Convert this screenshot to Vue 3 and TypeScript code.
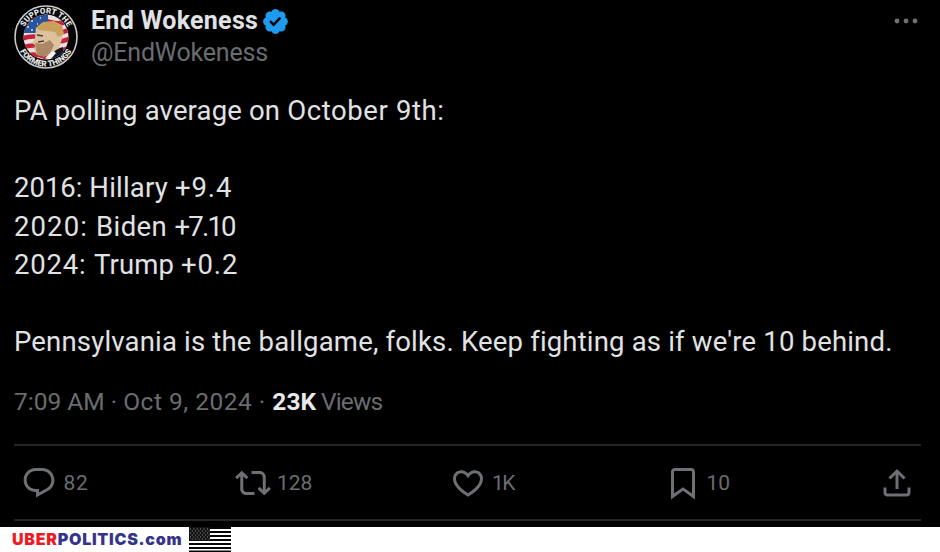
<script setup lang="ts">
interface Action {
  name: string
  label: string
  path: string
}

const actions: Action[] = [
  {
    name: 'reply',
    label: '82',
    path: 'M1.751 10c0-4.42 3.584-8 8.005-8h4.366c4.49 0 8.129 3.64 8.129 8.13 0 2.96-1.607 5.68-4.196 7.11l-8.054 4.46v-3.69h-.067c-4.49.1-8.183-3.51-8.183-8.01zm8.005-6c-3.317 0-6.005 2.69-6.005 6 0 3.37 2.77 6.08 6.138 6.01l.351-.01h1.761v2.3l5.087-2.81c1.951-1.08 3.163-3.13 3.163-5.36 0-3.39-2.744-6.13-6.129-6.13H9.756z',
  },
  {
    name: 'repost',
    label: '128',
    path: 'M4.5 3.88l4.432 4.14-1.364 1.46L5.5 7.55V16c0 1.1.896 2 2 2H13v2H7.5c-2.209 0-4-1.79-4-4V7.55L1.432 9.48.068 8.02 4.5 3.88zM16.5 6H11V4h5.5c2.209 0 4 1.79 4 4v8.45l2.068-1.93 1.364 1.46-4.432 4.14-4.432-4.14 1.364-1.46 2.068 1.93V8c0-1.1-.896-2-2-2z',
  },
  {
    name: 'like',
    label: '1K',
    path: 'M16.697 5.5c-1.222-.06-2.679.51-3.89 2.16l-.805 1.09-.806-1.09C9.984 6.01 8.526 5.44 7.304 5.5c-1.243.07-2.349.78-2.91 1.91-.552 1.12-.633 2.78.479 4.82 1.074 1.97 3.257 4.27 7.129 6.61 3.87-2.34 6.052-4.64 7.126-6.61 1.111-2.04 1.03-3.7.477-4.82-.561-1.13-1.666-1.84-2.908-1.91zm4.187 7.69c-1.351 2.48-4.001 5.12-8.379 7.67l-.503.3-.504-.3c-4.379-2.55-7.029-5.19-8.382-7.67-1.36-2.5-1.41-4.86-.514-6.67.887-1.79 2.647-2.91 4.601-3.01 1.651-.09 3.368.56 4.798 2.01 1.429-1.45 3.146-2.1 4.796-2.01 1.954.1 3.714 1.22 4.601 3.01.896 1.81.846 4.17-.514 6.67z',
  },
  {
    name: 'bookmark',
    label: '10',
    path: 'M4 4.5C4 3.12 5.119 2 6.5 2h11C18.881 2 20 3.12 20 4.5v18.44l-8-5.71-8 5.71V4.5zM6.5 4c-.276 0-.5.22-.5.5v14.56l6-4.29 6 4.29V4.5c0-.28-.224-.5-.5-.5h-11z',
  },
  {
    name: 'share',
    label: '',
    path: 'M12 2.59l5.7 5.7-1.41 1.42L13 6.41V16h-2V6.41l-3.3 3.3-1.41-1.42L12 2.59zM21 15l-.02 3.51c0 1.38-1.12 2.49-2.5 2.49H5.5C4.11 21 3 19.88 3 18.5V15h2v3.5c0 .28.22.5.5.5h12.98c.28 0 .5-.22.5-.5L19 15h2z',
  },
]

const results = [
  { cls: 'hillary', year: '2016: ', who: 'Hillary ', lead: '+9.4' },
  { cls: 'biden', year: '2020: ', who: 'Biden ', lead: '+7.10' },
  { cls: 'trump', year: '2024: ', who: 'Trump ', lead: '+0.2' },
]
</script>

<template>
  <main class="page">
    <article class="post">
      <header class="head">
        <svg class="avatar" viewBox="0 0 66 66">
          <defs>
            <clipPath id="disc"><circle cx="33" cy="33" r="22.5" /></clipPath>
            <path id="arc-top" d="M9.5 33a23.5 23.5 0 0 1 47 0" />
            <path id="arc-bottom" d="M3.5 33a29.5 29.5 0 0 0 59 0" />
          </defs>
          <circle cx="33" cy="33" r="31" fill="#050505" stroke="#c9c9c9" stroke-width="1.6" />
          <g clip-path="url(#disc)">
            <rect x="8" y="8" width="50" height="50" fill="#e9dfe0" />
            <path d="M8 17q12-5 25 0t25-1M8 26q12-5 25 0t25-1M8 35q12-5 25 0t25-1M8 44q12-5 25 0t25-1M8 53q12-5 25 0t25-1" fill="none" stroke="#c5213b" stroke-width="4.6" />
            <path d="M8 8h27v9L24 29H8z" fill="#29549c" />
            <path d="M14 23h2m2-6h2m4 3h1m-7 6h2m7-12h1" stroke="#dbe5f4" stroke-width="1.5" />
            <path d="M23 24l6-5 12-1 8 4 1 10-3 9-2 6-7 3-5 2-9-1-3-5 1-5-3-2 3-5z" fill="#dcc29c" />
            <path d="M24 23l6-5 11-1 8 4 2 9-6 3-3-5-17-2z" fill="#c9a05c" />
            <path d="M22 39l7 1 8-4 4 5-4 8-6 4-7-2z" fill="#ab8766" />
            <path d="M24 31l6 1M25 38l6-1" stroke="#523c34" stroke-width="1.4" />
            <path d="M35 54l8-8 7-3v13L39 59z" fill="#111820" />
            <path d="M32 54l8-7 3 2-6 7z" fill="#f2f2ee" />
          </g>
          <text class="ring"><textPath href="#arc-top" startOffset="50%">SUPPORT THE</textPath></text>
          <text class="ring"><textPath href="#arc-bottom" startOffset="50%">FORMER THINGS</textPath></text>
        </svg>
        <div class="who">
          <div class="name-row">
            <span class="name">End Wokeness</span>
            <svg class="badge" viewBox="0 0 22 22">
              <path fill="#1d9bf0" d="M20.396 11c-.018-.646-.215-1.275-.57-1.816-.354-.54-.852-.972-1.438-1.246.223-.607.27-1.264.14-1.897-.131-.634-.437-1.218-.882-1.687-.47-.445-1.053-.75-1.687-.882-.633-.13-1.29-.083-1.897.14-.273-.587-.704-1.086-1.245-1.44S11.647 1.62 11 1.604c-.646.017-1.273.213-1.813.568s-.969.854-1.24 1.44c-.608-.223-1.267-.272-1.902-.14-.635.13-1.22.436-1.69.882-.445.47-.749 1.055-.878 1.688-.13.633-.08 1.29.144 1.896-.587.274-1.087.705-1.443 1.245-.356.54-.555 1.17-.574 1.817.02.647.218 1.276.574 1.817.356.54.856.972 1.443 1.245-.224.606-.274 1.263-.144 1.896.13.634.433 1.218.877 1.688.47.443 1.054.747 1.687.878.633.132 1.29.084 1.897-.136.274.586.705 1.084 1.246 1.439.54.354 1.17.551 1.816.569.647-.016 1.276-.213 1.817-.567s.972-.854 1.245-1.44c.604.239 1.266.296 1.903.164.636-.132 1.22-.447 1.68-.907.46-.46.776-1.044.908-1.681s.075-1.299-.165-1.903c.586-.274 1.084-.705 1.439-1.246.354-.54.551-1.17.569-1.816zM9.662 14.85l-3.429-3.428 1.293-1.302 2.072 2.072 4.4-4.794 1.347 1.246z" />
            </svg>
          </div>
          <div class="handle">@EndWokeness</div>
        </div>
        <svg class="more" viewBox="0 0 24 6"><circle cx="3" cy="3" r="2.4" /><circle cx="12" cy="3" r="2.4" /><circle cx="21" cy="3" r="2.4" /></svg>
      </header>

      <div class="body">
        <p class="lead"><span class="intro">PA polling average on </span>October 9th:</p>
        <p></p>
        <p v-for="r in results" :key="r.cls" :class="r.cls"><span class="year">{{ r.year }}</span><span class="cand">{{ r.who }}</span><span class="margin">{{ r.lead }}</span></p>
        <p></p>
        <p class="closing">Pennsylvania is the ballgame, folks. Keep fighting as if we're 10 behind.</p>
      </div>

      <div class="meta"><span>7:09 AM · </span><span class="date">Oct 9, 2024 · </span><b>23K</b><span class="views">Views</span></div>

      <div class="actions">
        <div v-for="a in actions" :key="a.name" class="action" :class="a.name">
          <svg viewBox="0 0 24 24"><path :d="a.path" /></svg>
          <span v-if="a.label">{{ a.label }}</span>
        </div>
      </div>
    </article>

    <footer class="brand">
      <span class="site"><span class="red">UBER</span>POLITICS.com</span>
      <svg class="flag" viewBox="0 0 42 25">
        <rect width="42" height="25" fill="#fff" />
        <path d="M0 1h42M0 5h42M0 9h42M0 13h42M0 17h42M0 21h42M0 24.6h42" stroke="#050505" stroke-width="2.2" />
        <rect width="21" height="14" fill="#111" />
        <path d="M1 2h20M1 6h20M1 10h20" stroke="#999" stroke-width="1" stroke-dasharray="1 2.4" />
        <path d="M2.7 4h18M2.7 8h18M2.7 12h18" stroke="#999" stroke-width="1" stroke-dasharray="1 2.4" />
      </svg>
    </footer>
  </main>
</template>

<style>
body {
  margin: 0;
  background: #fff;
}
</style>

<style scoped>
.page {
  width: 940px;
  height: 552px;
  overflow: hidden;
  background: #fff;
  font-family: Roboto, "Liberation Sans", sans-serif;
}
.post {
  box-sizing: border-box;
  height: 527px;
  padding: 4px 19px 0 14px;
  background: #000;
  color: #e0e2e4;
}
.head {
  display: flex;
  height: 88px;
}
.avatar {
  width: 66px;
  height: 66px;
  margin-left: -1px;
}
.ring {
  font: 900 8px Roboto, sans-serif;
  fill: #e4e4e4;
  text-anchor: middle;
}
.who {
  flex: 1;
  margin-left: 12px;
}
.name-row {
  display: flex;
  align-items: center;
  height: 34px;
}
.name {
  padding-bottom: 2px;
  font-size: 25px;
  font-weight: 700;
  letter-spacing: 0.28px;
  white-space: nowrap;
}
.badge {
  width: 29px;
  height: 29px;
  margin-left: 3px;
}
.handle {
  font-size: 25px;
  line-height: 30px;
  letter-spacing: -0.18px;
  color: #6a6d70;
}
.more {
  width: 24px;
  height: 6px;
  margin: 14px 3px 0 0;
  fill: #6e7174;
}
.body {
  font-size: 27.5px;
}
p {
  height: 38.5px;
  margin: 0;
  line-height: 38.5px;
  white-space: pre;
}
.lead {
  letter-spacing: 0.6px;
}
.intro {
  letter-spacing: 0.16px;
}
.hillary .cand {
  letter-spacing: 0.2px;
}
.hillary .margin {
  letter-spacing: 0.9px;
}
.biden .year {
  letter-spacing: 1.1px;
}
.biden .cand {
  letter-spacing: 0.45px;
}
.biden .margin {
  letter-spacing: -1.8px;
}
.trump .year {
  letter-spacing: 0.8px;
}
.trump .cand {
  letter-spacing: 0.1px;
}
.trump .margin {
  letter-spacing: 0.9px;
}
.closing {
  letter-spacing: 0.18px;
}
.meta {
  height: 82px;
  box-sizing: border-box;
  padding-top: 25px;
  font-size: 24.5px;
  line-height: 30px;
  color: #6a6d70;
  white-space: pre;
}
.date {
  letter-spacing: 0.5px;
}
.meta b {
  color: #e7e9ea;
}
.views {
  margin-left: 5px;
  letter-spacing: -0.9px;
}
.actions {
  display: grid;
  grid-template-columns: 214.5px 215px 214.5px 214.5px 1fr;
  box-sizing: border-box;
  height: 77.5px;
  padding: 1px 0 0 6.5px;
  border-top: 2px solid #232526;
  border-bottom: 2px solid #232526;
}
.action {
  display: flex;
  align-items: center;
  font-size: 21px;
  color: #6a6d70;
}
.action svg {
  width: 36px;
  height: 36px;
  flex: none;
  fill: #6e7174;
}
.action span {
  margin-left: 6px;
}
.reply span {
  margin-left: 7px;
  letter-spacing: 0.8px;
}
.like span {
  letter-spacing: -1.6px;
}
.brand {
  display: flex;
  height: 25px;
}
.site {
  width: 169px;
  margin-left: 12px;
  font: 900 16px/25px Inter, sans-serif;
  letter-spacing: 0.75px;
  color: #34358a;
  white-space: nowrap;
}
.red {
  color: #ed1c24;
}
.flag {
  width: 42px;
  height: 25px;
  margin-left: 8px;
}
</style>
